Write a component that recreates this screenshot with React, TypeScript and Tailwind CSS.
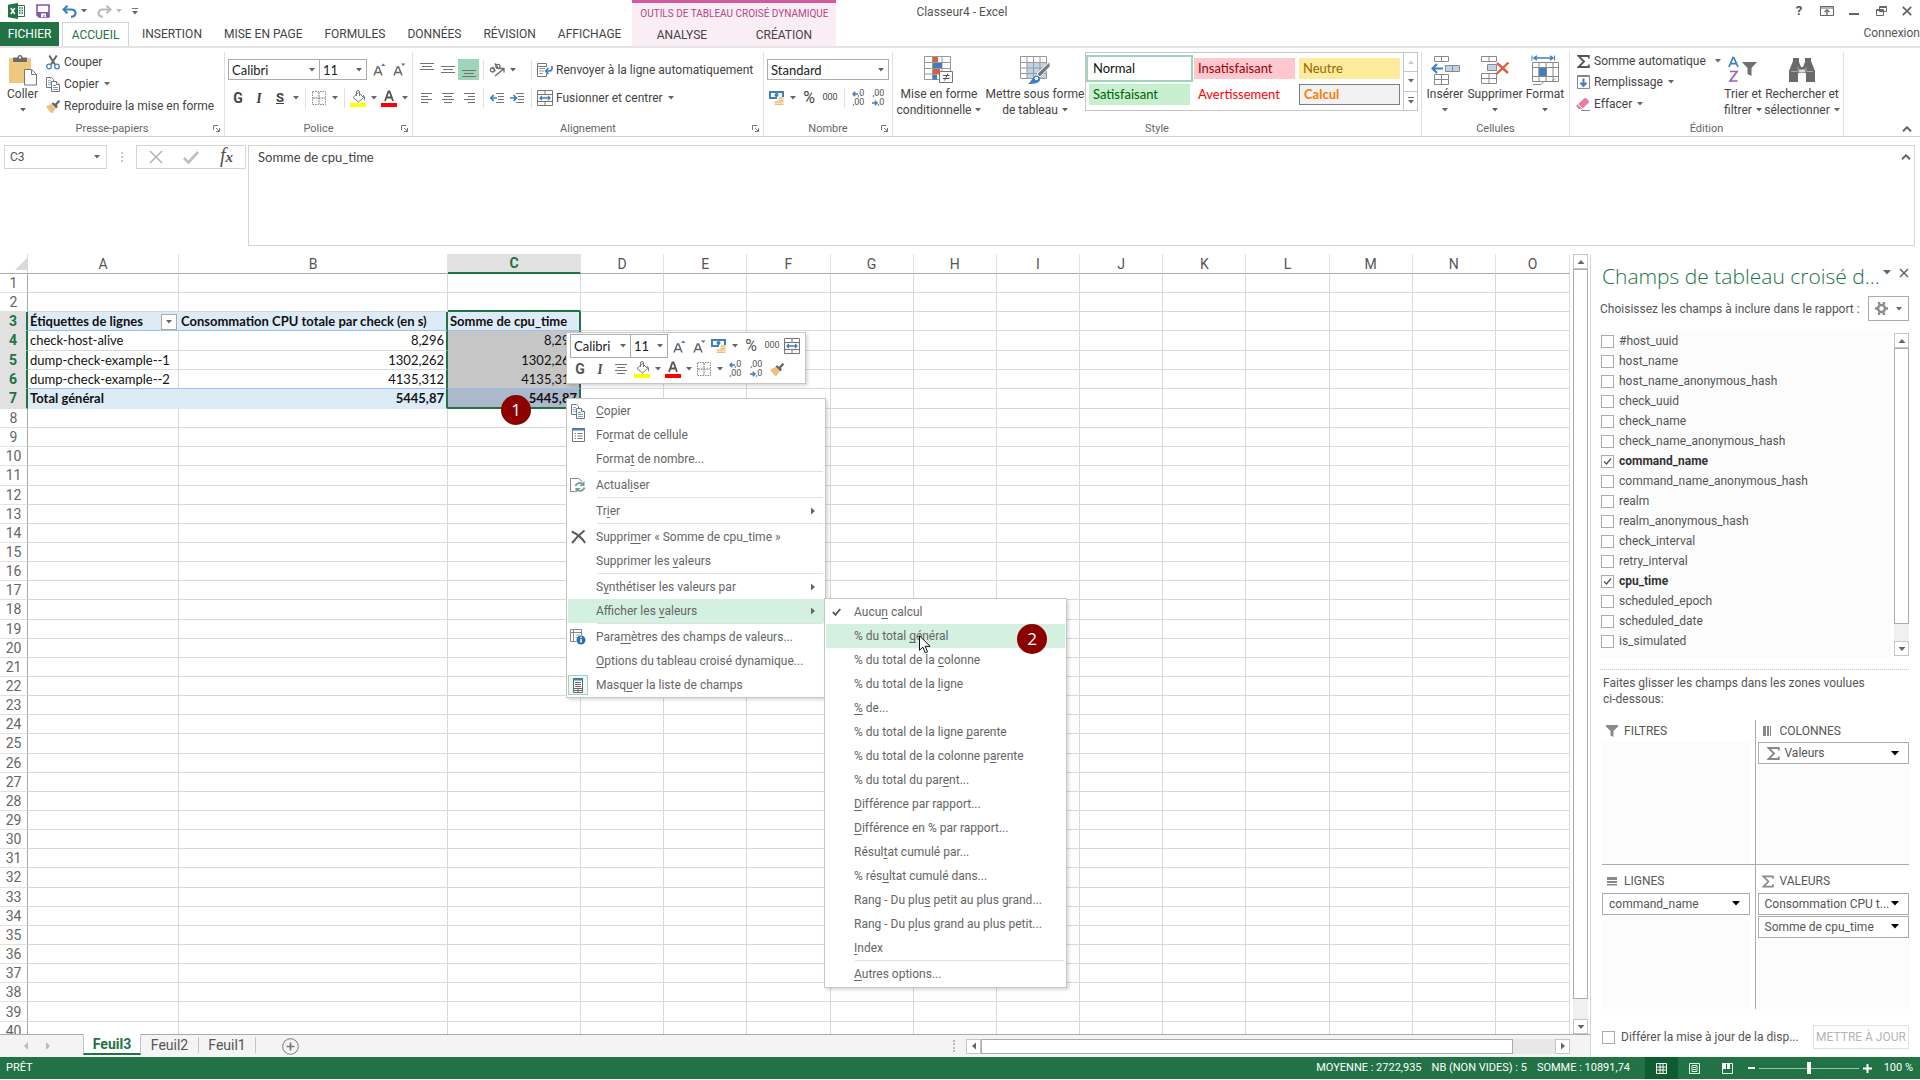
import { useState } from "react";
import type { ReactNode } from "react";
import clsx from "clsx";

/* ---------- small helpers ---------- */

const Caret = ({ className = "text-[#666]" }: { className?: string }) => (
  <svg viewBox="0 0 6 4" className={clsx("h-1 w-1.5 shrink-0", className)} fill="currentColor">
    <path d="M0 0h6L3 3.6z" />
  </svg>
);

const Tool = ({ label, className = "w-5", children }: { label: string; className?: string; children: ReactNode }) => (
  <button aria-label={label} className={clsx("flex h-5 shrink-0 items-center justify-center", className)}>
    {children}
  </button>
);

const Drop = ({ label }: { label: string }) => (
  <Tool label={label} className="w-[11px]">
    <Caret />
  </Tool>
);

const Sep = () => (
  <span className="flex h-5 w-2 shrink-0 justify-center">
    <span className="w-px bg-[#e1e1e1]" />
  </span>
);

const Combo = ({ label, value, className }: { label: string; value: string; className: string }) => (
  <span className={clsx("relative flex shrink-0 items-center border border-[#ababab] bg-white", className)}>
    <select
      aria-label={label}
      className="h-full w-full appearance-none bg-transparent pl-[3px] font-[Lato,sans-serif] text-[13px] leading-4 text-[#222] outline-none"
    >
      <option>{value}</option>
    </select>
    <Caret className="pointer-events-none absolute right-1 text-[#666]" />
  </span>
);

// "&" stands before the access key of a menu label
const Mnemonic = ({ text }: { text: string }) => {
  const i = text.indexOf("&");
  if (i < 0) return <>{text}</>;
  return (
    <>
      {text.slice(0, i)}
      <u className="underline-offset-2">{text[i + 1]}</u>
      {text.slice(i + 2)}
    </>
  );
};

/* ---------- icons ---------- */

const ExcelLogo = () => (
  <svg viewBox="0 0 17 16" className="h-4 w-[17px]">
    <path d="M9 2.5h7.5v11H9" fill="#fff" stroke="#217346" />
    <path d="M11 5h1.500M13.500 5H15M11 7.500h1.500M13.500 7.500H15M11 10h1.500M13.500 10H15" stroke="#217346" strokeWidth="1.300" />
    <path d="M0 1.800L10 0v16L0 14.200z" fill="#217346" />
    <path d="M2.800 5l4 6M6.800 5l-4 6" stroke="#fff" strokeWidth="1.500" />
  </svg>
);

const SaveIcon = () => (
  <svg viewBox="0 0 14 14" className="size-[14px]">
    <path d="M1 1h12v12H3l-2-2z" fill="#fff" stroke="#8656a8" strokeWidth="1.600" />
    <path d="M1 8h12v5H3l-2-2z" fill="#8656a8" />
    <path d="M5 9.500h5V13H8.500v-2h-1v2H5z" fill="#fff" />
  </svg>
);

const UndoIcon = ({ className = "" }: { className?: string }) => (
  <svg viewBox="0 0 15 13" className={clsx("h-[13px] w-[15px]", className)} fill="none" stroke="currentColor" strokeWidth="2.200">
    <path d="M2 4.500h7c3 0 4.500 1.600 4.500 3.600S12 11.800 9 11.800" />
    <path d="M5.500 .8L1.600 4.500l3.900 3.700" />
  </svg>
);

const PasteIcon = () => (
  <svg viewBox="0 0 28 31" className="h-[31px] w-7">
    <rect x="0" y="3" width="22" height="25" fill="#edc87e" />
    <path d="M4 2.500h4.500a2.500 2.500 0 0 1 5 0H18V7H4z" fill="#6b6b6b" />
    <circle cx="11" cy="2.600" r="1.100" fill="#fff" />
    <path d="M15.500 14.500h7l5 5v10.500h-12z" fill="#fff" stroke="#777" />
    <path d="M22.500 14.500v5h5" fill="none" stroke="#777" />
  </svg>
);

const CutIcon = () => (
  <svg viewBox="0 0 14 15" className="h-[15px] w-[14px]" fill="none">
    <path d="M3.300 .5L9 9.500M10.700 .5L5 9.500" stroke="#666" strokeWidth="2" />
    <circle cx="3" cy="11.500" r="2.300" stroke="#4a82bd" strokeWidth="1.300" />
    <circle cx="11" cy="11.500" r="2.300" stroke="#4a82bd" strokeWidth="1.300" />
  </svg>
);

const CopyIcon = () => (
  <svg viewBox="0 0 14 15" className="h-[15px] w-[14px]" fill="#fff" stroke="#777">
    <path d="M.5 .5h5l2 2v8h-7z" />
    <path d="M2 3.500h3M2 5.500h3M2 7.500h3" stroke="#8ab0d8" />
    <path d="M5.500 4.500h5l3 3v7h-8z" />
    <path d="M10.500 4.500v3h3" />
    <path d="M7 8.500h3M7 10.500h5M7 12.500h5" stroke="#6f9fd0" />
  </svg>
);

const BrushIcon = () => (
  <svg viewBox="0 0 15 13" className="h-[13px] w-[15px]">
    <path d="M0 6.500L5.500 4 9.500 8.500 6.500 13 4.500 12.500z" fill="#edc07c" />
    <path d="M5.500 3.500L7 2.200l2 1.600L12.500 0l1.800 1.200L11 5l.8 1.800L10.200 8.500z" fill="#666" />
  </svg>
);

const FontSize = ({ down }: { down?: boolean }) => (
  <svg viewBox="0 0 13 13" className="size-[13px]" fill="none">
    <path d="M1 12.500L4.400 4h1.200L9 12.500M2.300 9.500h5.400" stroke="#666" strokeWidth="1.500" />
    <path d={down ? "M8 .5h4.500L10.200 3z" : "M8 3h4.500L10.200 .5z"} fill="#3f7fbf" />
  </svg>
);

const BorderIcon = () => (
  <svg viewBox="0 0 14 14" className="size-[14px]" fill="none" stroke="#888">
    <path d="M.5 .5h13v13H.5z" strokeDasharray="1.500 1" />
    <path d="M7 1v12M1 7h12" stroke="#777" strokeDasharray="2 .8" />
  </svg>
);

const FillIcon = () => (
  <svg viewBox="0 0 16 17" className="h-[17px] w-4">
    <path d="M3 7.500L8.500 2.500l5 5-5 4.500z" fill="#fff" stroke="#777" />
    <path d="M6.500 6V2a1.500 1.500 0 0 1 3 0v4" fill="none" stroke="#777" />
    <path d="M12.500 4.500c2 .5 3 2.500 2.500 6.500-1-1.500-1-3-1.500-4z" fill="#3f7fbf" />
    <rect x="0" y="13" width="16" height="4" fill="#ff0" />
  </svg>
);

const FontColorIcon = () => (
  <svg viewBox="0 0 16 17" className="h-[17px] w-4">
    <path d="M4 11L7.400 1.500h1.200L12 11M5.300 7.500h5.400" fill="none" stroke="#555" strokeWidth="1.800" />
    <rect x="0" y="13" width="16" height="4" fill="red" />
  </svg>
);

const lineShapes = {
  top: "M0 1.500h14M2 4.500h10M0 7.500h14",
  middle: "M0 4.500h14M2 7.500h10M0 10.500h14",
  bottom: "M0 8.500h14M2 11.500h10M0 14.500h14",
  left: "M1 3.500h11M1 6.500h7M1 9.500h11M1 12.500h7",
  center: "M1 3.500h12M3 6.500h8M1 9.500h12M3 12.500h8",
  right: "M2 3.500h11M6 6.500h7M2 9.500h11M6 12.500h7",
};

const Lines = ({ kind }: { kind: keyof typeof lineShapes }) => (
  <svg viewBox="0 0 14 16" className="h-4 w-[14px]" stroke="#737373">
    <path d={lineShapes[kind]} />
  </svg>
);

const OrientationIcon = () => (
  <svg viewBox="0 0 16 14" className="h-[14px] w-4" fill="none" stroke="#6a6a6a" strokeWidth="1.300">
    <circle cx="3.400" cy="7" r="2" />
    <path d="M3.200 3.800l3.200 4.400M5.800 .5l4 5.500" />
    <circle cx="9" cy="3.400" r="2" />
    <path d="M6 13l8.500-7M11 5.500h4v4" />
  </svg>
);

const IndentIcon = ({ right }: { right?: boolean }) => (
  <svg viewBox="0 0 14 12" className="h-3 w-[14px]" fill="none">
    <path d="M6 1.500h8M8 4.500h6M8 7.500h6M6 10.500h8" stroke="#777" />
    <path d={right ? "M0 6h6M3.500 3L6.500 6l-3 3" : "M1 6h6M3.800 3L.8 6l3 3"} stroke="#3f7fbf" strokeWidth="1.700" />
  </svg>
);

const WrapIcon = () => (
  <svg viewBox="0 0 16 14" className="h-[14px] w-4" fill="none">
    <path d="M.5 .5h9v3h-9zM.5 3.500v10h9v-3" stroke="#777" />
    <path d="M2 5.500h6M2 8h5M2 10.500h4" stroke="#999" />
    <path d="M15 3v2.500c0 2-1 2.500-3 2.500H9M11.500 5L8.700 8l2.800 3" stroke="#3f7fbf" strokeWidth="1.700" />
  </svg>
);

const MergeIcon = () => (
  <svg viewBox="0 0 16 16" className="size-4" fill="none">
    <path d="M.5 .5h15v15H.5zM.5 4.500h15M.5 11.500h15M8 .5v4M8 11.500v4" stroke="#777" />
    <path d="M3 8h10M5 6L3 8l2 2M11 6l2 2-2 2" stroke="#3f7fbf" strokeWidth="1.300" />
  </svg>
);

const MoneyIcon = () => (
  <svg viewBox="0 0 16 15" className="h-[15px] w-4">
    <path d="M0 0h15v8H0z" fill="#3f7fbf" />
    <path d="M2 2h11v4H2z" fill="#fff" />
    <circle cx="7.500" cy="4" r="2" fill="#3f7fbf" />
    <path d="M8 6h7v8.500H5V9h3z" fill="#fff" />
    <path d="M9.500 7h5M9.500 9.300h5M5.500 11h9M5.500 13.300h9" stroke="#edbd78" strokeWidth="1.500" />
  </svg>
);

const SmallArrow = ({ flip }: { flip?: boolean }) => (
  <svg viewBox="0 0 6 6" className={clsx("size-1.5", flip && "rotate-180")} fill="none" stroke="#3f7fbf" strokeWidth="1.500">
    <path d="M6 3H1M3.200 .8L1 3l2.200 2.200" />
  </svg>
);

const DecimalIcon = ({ less }: { less?: boolean }) => (
  <span className="flex flex-col text-[9px] leading-[9px] text-[#555]">
    <span className="flex h-[9px] items-center justify-end">
      {!less && <SmallArrow />}
      {less ? ",00" : ",0"}
    </span>
    <span className="flex h-[9px] items-center justify-end">
      {less && <SmallArrow flip />}
      {less ? ",0" : ",00"}
    </span>
  </span>
);

const CondFormatIcon = () => (
  <svg viewBox="0 0 30 28" className="h-7 w-[30px]" fill="none">
    <path d="M.5 .5h26v23H.5zM.5 6.500h26M.5 12.500h26M.5 18h26M8.500 .5v23M18 .5v23" stroke="#999" />
    <path d="M9 1h5v5H9zM9 13h7v5H9z" fill="#d7603b" />
    <path d="M9 7h9v5H9zM9 18.500h4v5H9z" fill="#3f7fbf" />
    <path d="M15.500 15.500h13v11h-13z" fill="#fff" stroke="#777" />
    <path d="M19 19.500h6.500M19 22.500h6.500M24 17.500l-3.500 7" stroke="#555" />
  </svg>
);

const TableFormatIcon = () => (
  <svg viewBox="0 0 30 28" className="h-7 w-[30px]" fill="none">
    <path d="M7 6.500h19V23H7z" fill="#bdd3ea" />
    <path d="M.5 .5h26v22H.5zM.5 6.500h26M.5 12h26M.5 17.500h26M7 .5v22M13.500 .5v22M20 .5v22" stroke="#999" />
    <path d="M30 5.500v5L20 21l-3-3z" fill="#777" stroke="#fff" />
    <path d="M8 28c3-2 4-6 7-8 3-1 6 1 5 4-1 3-5 4-12 4z" fill="#3f7fbf" />
    <circle cx="16.500" cy="22.500" r="1.800" fill="#fff" />
  </svg>
);

const InsertIcon = () => (
  <svg viewBox="0 0 29 29" className="size-[29px]" fill="#fff" stroke="#888">
    <path d="M3.500 .5h14v5h-14zM10.500 .5v5M3.500 18.500h14v10h-14zM10.500 18.500v10M3.500 23.500h14" />
    <path d="M14.500 9.500h14v6h-14z" fill="#bdd3ea" />
    <path d="M21.500 9.500v6" />
    <path d="M12 12.500H2M6 8l-4.500 4.500L6 17" stroke="#3f7fbf" strokeWidth="2.200" fill="none" />
  </svg>
);

const DeleteIcon = () => (
  <svg viewBox="0 0 29 29" className="size-[29px]" fill="#fff" stroke="#888">
    <path d="M.5 .5h15v5H.5zM8 .5v5M.5 17.500h15v10H.5zM8 17.500v10M.5 22.500h15" />
    <path d="M6.500 8.500h9v6h-9z" fill="#bdd3ea" />
    <path d="M16 7l11 10M27.500 6.500L15.500 18" stroke="#dc5f3c" strokeWidth="2.400" />
  </svg>
);

const FormatIcon = () => (
  <svg viewBox="0 0 29 30" className="h-[30px] w-[29px]" fill="#fff" stroke="#888">
    <path d="M1 .5v5M23.500 .5v5" stroke="#3f7fbf" />
    <path d="M3 3h19M6 .8L3 3l3 2.200M19 .8L22 3l-3 2.200" stroke="#3f7fbf" strokeWidth="1.400" fill="none" />
    <path d="M1.500 7.500h26v19h-26zM1.500 12.500h26M1.500 21.500h26M8 7.500v19M15 7.500v19M22 7.500v19" />
    <path d="M8 12.500h7.500v9H8z" fill="#3f7fbf" />
    <path d="M2 29.500h8l3-3h8l3-3" fill="none" />
  </svg>
);

const SigmaIcon = ({ className = "text-[#555]" }: { className?: string }) => (
  <svg viewBox="0 0 13 13" className={clsx("size-[13px]", className)} fill="none" stroke="currentColor" strokeWidth="1.800">
    <path d="M11.800 3.500V1H1.500L7 6.500 1.500 12h10.300V9.500" />
  </svg>
);

const FillDownIcon = () => (
  <svg viewBox="0 0 13 14" className="h-[14px] w-[13px]" fill="none">
    <path d="M.5 .5h12v13H.5z" stroke="#888" />
    <path d="M.5 1.500h12" stroke="#888" />
    <path d="M6.500 3.500v7M3.500 7.800l3 3 3-3" stroke="#3f7fbf" strokeWidth="2" />
  </svg>
);

const EraserIcon = () => (
  <svg viewBox="0 0 14 14" className="size-[14px]">
    <path d="M0 9L8 1.500c1-1 1.500-1 2.500 0l2 2c1 1 .5 1.500 0 2.500L6 12H3z" fill="#e8809b" />
    <path d="M2 7.500l4.500 4" stroke="#fff" />
    <path d="M5 13.500h9" stroke="#888" />
  </svg>
);

const SortIcon = () => (
  <svg viewBox="0 0 30 28" className="h-7 w-[30px]" fill="none">
    <path d="M1 11L5 1.500h.8L10 11M2.500 7.700h6" stroke="#3f7fbf" strokeWidth="1.700" />
    <path d="M2 15.500h7l-7 9.500h7.500" stroke="#9b5fc0" strokeWidth="1.700" />
    <path d="M14 6h15l-5.500 6v8l-4-2v-6z" fill="#6f6f6f" />
  </svg>
);

const FindIcon = () => (
  <svg viewBox="0 0 28 26" className="h-[26px] w-7" fill="#6a6a6a">
    <path d="M1 14L5 4V1h6v4l2 5h2l2-5V1h6v3l4 10v11h-9v-9h-8v9H1z" />
    <path d="M10 10v5M18 10v5M3 14.500h6M19 14.500h6" stroke="#aaa" />
    <path d="M11 12.500h6v3h-6z" fill="#ddd" />
  </svg>
);

const FunnelIcon = () => (
  <svg viewBox="0 0 12 12" className="size-3" fill="#8a8a8a">
    <path d="M0 0h12v1.500L7.500 6v6l-3-1.500V6L0 1.500z" />
  </svg>
);

const FieldListIcon = () => (
  <svg viewBox="0 0 10 15" className="h-[15px] w-[10px]" fill="#fff" stroke="#666">
    <path d="M.5 .5h9v14h-9z" />
    <path d="M.5 1.500h9" stroke="#3f7fbf" strokeWidth="2" />
    <path d="M2 4.500h6M2 6.500h6M2 8.500h6M.5 10.500h9M5 10.500v4M.5 12.500h9" />
  </svg>
);

const CellFormatIcon = () => (
  <svg viewBox="0 0 13 14" className="h-[14px] w-[13px]" fill="#fff" stroke="#777">
    <path d="M.5 .5h12v13H.5z" />
    <path d="M0 1.500h13" stroke="#3f7fbf" strokeWidth="2" />
    <path d="M2.500 5.500h1.500M5.500 5.500h5M2.500 8h1.500M5.500 8h5M2.500 10.500h1.500M5.500 10.500h5" />
  </svg>
);

const RefreshDocIcon = () => (
  <svg viewBox="0 0 16 15" className="h-[15px] w-4" fill="none">
    <path d="M5 13.500H.5V.5h8l4 3" stroke="#888" />
    <path d="M5.500 8C6.500 5 10.500 4 13 6.500M14.500 9.500c-1 3.500-5 4.500-7.500 2" stroke="#6aa68a" strokeWidth="1.900" />
    <path d="M14.500 3v5h-5zM5.500 15v-5h5z" fill="#6aa68a" />
  </svg>
);

const CrossIcon = () => (
  <svg viewBox="0 0 15 14" className="h-[14px] w-[15px]" fill="none" stroke="#5c5c5c" strokeWidth="2">
    <path d="M.8 1.500C6 4 11 8 14.200 13M13.500 .5C9 4 4 9 1 13.200" />
  </svg>
);

const FieldSettingsIcon = () => (
  <svg viewBox="0 0 16 16" className="size-4" fill="none">
    <path d="M11.500 6V.5H.5v12h6M.5 3.500h11M3.500 .5v12" stroke="#888" />
    <path d="M5.500 6h4M5.500 8.500h2" stroke="#aaa" />
    <circle cx="11" cy="11" r="4.500" fill="#2f6fb0" />
    <path d="M11 10v3.500M11 7.800v1.300" stroke="#fff" strokeWidth="1.500" />
  </svg>
);

const Chevron = () => (
  <svg viewBox="0 0 10 6" className="h-1.5 w-[10px]" fill="none" stroke="#666" strokeWidth="2">
    <path d="M1 5.300L5 1.300l4 4" />
  </svg>
);

/* ---------- ribbon ---------- */

const Group = ({ label, launcher, className, children }: { label: string; launcher?: boolean; className: string; children: ReactNode }) => (
  <section className={clsx("flex shrink-0 flex-col border-r border-[#e1e1e1]", className)}>
    <div className="flex-1">{children}</div>
    <div className="relative flex h-[15px] items-center justify-center text-[11px] leading-[15px] text-[#666]">
      {label}
      {launcher && (
        <button aria-label={"Options " + label} className="absolute right-1">
          <svg viewBox="0 0 7 7" className="size-[7px]" fill="none" stroke="#777">
            <path d="M.5 5V.5H5M3 3l3 3M6.500 3v3.500H3" />
          </svg>
        </button>
      )}
    </div>
  </section>
);

const BigButton = ({ icon, lines, caret = "below", className }: { icon: ReactNode; lines: string[]; caret?: "below" | "inline"; className?: string }) => (
  <button className={clsx("flex shrink-0 flex-col items-center pt-[2px] text-[12px] leading-4 whitespace-nowrap", className)}>
    <span className="flex h-8 items-center">{icon}</span>
    {lines.map((line, i) => (
      <span key={line} className="flex items-center gap-1">
        {line}
        {caret === "inline" && i === lines.length - 1 && <Caret />}
      </span>
    ))}
    {caret === "below" && (
      <span className="flex h-4 items-center">
        <Caret />
      </span>
    )}
  </button>
);

const RowButton = ({ icon, label, caret, className = "h-[22px]" }: { icon: ReactNode; label: string; caret?: "near" | "far"; className?: string }) => (
  <button className={clsx("flex shrink-0 items-center gap-[3px] text-[12px] whitespace-nowrap", className)}>
    <span className="flex w-4 justify-center">{icon}</span>
    {label}
    {caret && <span className={caret === "far" ? "pl-1.5" : "pl-0.5"}><Caret /></span>}
  </button>
);

const cellStyles = [
  { name: "Normal", cls: "bg-white text-[#111] outline-2 outline-offset-1 outline-[#9fd5b7]" },
  { name: "Insatisfaisant", cls: "bg-[#ffc7ce] text-[#9c0006]" },
  { name: "Neutre", cls: "bg-[#ffeb9c] text-[#9c6500]" },
  { name: "Satisfaisant", cls: "bg-[#c6efce] text-[#006100]" },
  { name: "Avertissement", cls: "bg-white text-[#ff0000]" },
  { name: "Calcul", cls: "border border-[#7f7f7f] bg-[#f2f2f2] font-bold text-[#fa7d00]" },
];

const tabs = ["INSERTION", "MISE EN PAGE", "FORMULES", "DONNÉES", "RÉVISION", "AFFICHAGE"];

const Header = () => (
  <header className="flex h-12 border-b-2 border-[#e4e4e4]">
    <div className="flex shrink-0 flex-col">
      <div className="flex h-[23px] items-center pl-2">
        <ExcelLogo />
        <button aria-label="Enregistrer" className="ml-[11px]"><SaveIcon /></button>
        <button aria-label="Annuler" className="ml-3 flex items-center gap-1">
          <UndoIcon className="text-[#3f7fbf]" />
          <Caret />
        </button>
        <button aria-label="Rétablir" className="ml-[10px] flex items-center gap-1">
          <UndoIcon className="-scale-x-100 text-[#bbb]" />
          <Caret className="text-[#bbb]" />
        </button>
        <button aria-label="Personnaliser" className="ml-[10px] flex flex-col gap-0.5">
          <span className="h-px w-1.5 bg-[#777]" />
          <Caret />
        </button>
      </div>
      <nav className="flex h-[25px] items-center text-[12px] text-[#444]">
        <button className="h-full w-[59px] bg-[#217346] text-white">FICHIER</button>
        <button className="z-10 mr-[2px] ml-[3px] h-full w-[67px] border border-b-0 border-[#d4d4d4] bg-white text-[#217346]">ACCUEIL</button>
        {tabs.map((t) => (
          <button key={t} className="px-[11px] whitespace-nowrap">{t}</button>
        ))}
      </nav>
    </div>
    <div className="flex h-[46px] w-[204px] shrink-0 flex-col border-t-[3px] border-[#cf5c9f] bg-[#faedf4]">
      <div className="flex h-5 items-center justify-center text-[10px] whitespace-nowrap text-[#b3478a]">OUTILS DE TABLEAU CROISÉ DYNAMIQUE</div>
      <div className="flex flex-1 items-center justify-around text-[12px] text-[#444]">
        <button>ANALYSE</button>
        <button>CRÉATION</button>
      </div>
    </div>
    <h1 className="flex-1 pt-1 pl-20 text-[12px] leading-4 text-[#555]">Classeur4 - Excel</h1>
    <div className="flex flex-col items-end text-[#555]">
      <div className="flex h-[22px] items-center gap-[15px] pr-2">
        <button aria-label="Aide" className="w-3 text-[13px] font-bold">?</button>
        <button aria-label="Options d'affichage du ruban">
          <svg viewBox="0 0 14 10" className="h-[10px] w-[14px]" fill="none" stroke="#666">
            <path d="M.5 .5h13v9H.5zM.5 2h13" />
            <path d="M7 9V4M4.500 6L7 3.800 9.500 6" strokeWidth="1.300" />
          </svg>
        </button>
        <button aria-label="Réduire" className="w-3 pt-1.5"><span className="block h-0.5 w-[10px] bg-[#666]" /></button>
        <button aria-label="Niveau inférieur">
          <svg viewBox="0 0 11 10" className="h-[10px] w-[11px]" fill="#fff" stroke="#666">
            <path d="M3.500 .5h7v5h-7zM3.500 1.500h7M.5 3.500h7v6h-7zM.5 4.500h7" />
          </svg>
        </button>
        <button aria-label="Fermer">
          <svg viewBox="0 0 10 10" className="size-[10px]" stroke="#666" strokeWidth="1.800">
            <path d="M.8 .8l8.400 8.400M9.200 .8L.8 9.200" />
          </svg>
        </button>
      </div>
      <a href="#connexion" className="pt-[3px] text-[12px] leading-4">Connexion</a>
    </div>
  </header>
);

const Ribbon = () => (
  <div className="flex h-[89px] border-b border-[#d4d4d4] pt-1 text-[#444]">
    <Group label="Presse-papiers" launcher className="w-[225px]">
      <div className="flex">
        <BigButton icon={<PasteIcon />} lines={["Coller"]} className="w-[45px]" />
        <div className="flex flex-col items-start">
          <RowButton icon={<CutIcon />} label="Couper" className="h-5" />
          <RowButton icon={<CopyIcon />} label="Copier" caret="near" className="h-6" />
          <RowButton icon={<BrushIcon />} label="Reproduire la mise en forme" className="h-5" />
        </div>
      </div>
    </Group>

    <Group label="Police" launcher className="w-[188px]">
      <div className="flex flex-col gap-2 pt-[7px] pl-[3px]">
        <div className="flex h-[21px] items-center">
          <Combo label="Police" value="Calibri" className="h-[21px] w-[92px]" />
          <Combo label="Taille" value="11" className="-ml-px h-[21px] w-12" />
          <Tool label="Augmenter la taille" className="ml-[2px] w-5"><FontSize /></Tool>
          <Tool label="Réduire la taille"><FontSize down /></Tool>
        </div>
        <div className="flex items-center">
          <Tool label="Gras"><b className="text-[14px]">G</b></Tool>
          <Tool label="Italique" className="w-[22px]"><i className="font-serif text-[14px] font-bold">I</i></Tool>
          <Tool label="Souligné"><b className="text-[13px] underline">S</b></Tool>
          <Drop label="Options de soulignement" />
          <Sep />
          <Tool label="Bordures"><BorderIcon /></Tool>
          <Drop label="Options de bordure" />
          <Sep />
          <Tool label="Remplissage"><FillIcon /></Tool>
          <Drop label="Couleurs de remplissage" />
          <Tool label="Couleur de police"><FontColorIcon /></Tool>
          <Drop label="Couleurs de police" />
        </div>
      </div>
    </Group>

    <Group label="Alignement" launcher className="w-[351px]">
      <div className="flex flex-col gap-2 pt-[7px] pl-[3px]">
        <div className="flex h-[21px] items-center">
          <Tool label="Aligner en haut" className="w-[21px]"><Lines kind="top" /></Tool>
          <Tool label="Aligner au centre" className="w-[21px]"><Lines kind="middle" /></Tool>
          <button aria-label="Aligner en bas" className="flex size-[21px] items-center justify-center bg-[#9fd5b7]"><Lines kind="bottom" /></button>
          <Sep />
          <Tool label="Orientation"><OrientationIcon /></Tool>
          <Drop label="Options d'orientation" />
          <span className="w-[9px]" />
          <Sep />
          <RowButton icon={<WrapIcon />} label="Renvoyer à la ligne automatiquement" className="h-5 pl-[2px]" />
        </div>
        <div className="flex h-5 items-center">
          <Tool label="Aligner à gauche" className="w-[21px]"><Lines kind="left" /></Tool>
          <Tool label="Centrer" className="w-[21px]"><Lines kind="center" /></Tool>
          <Tool label="Aligner à droite" className="w-[21px]"><Lines kind="right" /></Tool>
          <Sep />
          <Tool label="Diminuer le retrait"><IndentIcon /></Tool>
          <Tool label="Augmenter le retrait"><IndentIcon right /></Tool>
          <Sep />
          <RowButton icon={<MergeIcon />} label="Fusionner et centrer" caret="near" className="h-5 pl-[2px]" />
        </div>
      </div>
    </Group>

    <Group label="Nombre" launcher className="w-[129px]">
      <div className="flex flex-col gap-2 pt-[7px] pl-[3px]">
        <Combo label="Format de nombre" value="Standard" className="h-[21px] w-[122px]" />
        <div className="flex items-center">
          <Tool label="Format comptable"><MoneyIcon /></Tool>
          <Drop label="Options comptables" />
          <Tool label="Pourcentage" className="w-[22px]"><span className="text-[16px]">%</span></Tool>
          <Tool label="Milliers"><span className="text-[9px]">000</span></Tool>
          <Sep />
          <Tool label="Ajouter une décimale"><DecimalIcon /></Tool>
          <Tool label="Réduire les décimales"><DecimalIcon less /></Tool>
        </div>
      </div>
    </Group>

    <Group label="Style" className="w-[529px]">
      <div className="flex items-start">
        <BigButton icon={<CondFormatIcon />} lines={["Mise en forme", "conditionnelle"]} caret="inline" className="w-[92px]" />
        <BigButton icon={<TableFormatIcon />} lines={["Mettre sous forme", "de tableau"]} caret="inline" className="w-[100px]" />
        <div className="flex border border-[#c6c6c6] font-[Lato,sans-serif] text-[13px]">
          <div className="grid grid-cols-3 gap-x-1 gap-y-[5px] px-[3px] py-[5px]">
            {cellStyles.map((s) => (
              <button key={s.name} className={clsx("flex h-[21px] w-[101px] items-center pl-1", s.cls)}>{s.name}</button>
            ))}
          </div>
          <div className="flex w-[14px] flex-col divide-y divide-[#c6c6c6] border-l border-[#c6c6c6]">
            <button aria-label="Précédent" className="flex flex-1 items-center justify-center"><Caret className="rotate-180 text-[#ccc]" /></button>
            <button aria-label="Suivant" className="flex flex-1 items-center justify-center"><Caret /></button>
            <button aria-label="Autres" className="flex flex-1 flex-col items-center justify-center gap-0.5"><span className="h-px w-1.5 bg-[#777]" /><Caret /></button>
          </div>
        </div>
      </div>
    </Group>

    <Group label="Cellules" className="w-[148px]">
      <div className="flex">
        <BigButton icon={<InsertIcon />} lines={["Insérer"]} className="w-[46px]" />
        <BigButton icon={<DeleteIcon />} lines={["Supprimer"]} className="w-[54px]" />
        <BigButton icon={<FormatIcon />} lines={["Format"]} className="w-[46px]" />
      </div>
    </Group>

    <Group label="Édition" className="w-[274px]">
      <div className="flex pl-[5px]">
        <div className="flex w-[147px] flex-col items-start">
          <RowButton icon={<SigmaIcon />} label="Somme automatique" caret="far" className="h-[18px]" />
          <RowButton icon={<FillDownIcon />} label="Remplissage" caret="near" className="h-6" />
          <RowButton icon={<EraserIcon />} label="Effacer" caret="near" className="h-5" />
        </div>
        <BigButton icon={<SortIcon />} lines={["Trier et", "filtrer"]} caret="inline" className="w-[42px]" />
        <BigButton icon={<FindIcon />} lines={["Rechercher et", "sélectionner"]} caret="inline" className="w-[76px]" />
      </div>
    </Group>

    <div className="flex flex-1 items-end justify-end pr-2 pb-1">
      <button aria-label="Réduire le ruban"><Chevron /></button>
    </div>
  </div>
);

const FormulaBar = () => (
  <div className="flex h-[109px] pt-2 pr-[5px] pl-1">
    <div className="flex h-6 w-[103px] shrink-0 items-center border border-[#d4d4d4]">
      <input aria-label="Zone Nom" defaultValue="C3" className="w-full pl-[5px] text-[12px] text-[#555] outline-none" />
      <Caret className="mr-1.5 text-[#666]" />
    </div>
    <div className="flex h-6 w-[29px] shrink-0 flex-col items-center justify-center gap-0.5">
      <span className="size-0.5 bg-[#c4c4c4]" />
      <span className="size-0.5 bg-[#c4c4c4]" />
      <span className="size-0.5 bg-[#c4c4c4]" />
    </div>
    <div className="flex h-6 w-[110px] shrink-0 items-center justify-between border border-[#d4d4d4] px-3">
      <button aria-label="Annuler la saisie">
        <svg viewBox="0 0 14 14" className="size-[14px]" stroke="#b5b5b5" strokeWidth="1.600"><path d="M1 1l12 12M13 1L1 13" /></svg>
      </button>
      <button aria-label="Valider">
        <svg viewBox="0 0 16 13" className="h-[13px] w-4" fill="none" stroke="#c0c0c0" strokeWidth="2.800"><path d="M1 7l4.500 4.500L15 1" /></svg>
      </button>
      <button aria-label="Insérer une fonction" className="pb-0.5 font-[Liberation_Serif,serif] text-[20px] leading-5 text-[#555] italic">
        f<span className="text-[15px] font-bold">x</span>
      </button>
    </div>
    <div className="ml-[2px] flex h-[101px] flex-1 border border-[#d4d4d4]">
      <textarea
        aria-label="Barre de formule"
        defaultValue="Somme de cpu_time"
        className="flex-1 resize-none pt-[3px] pl-[9px] font-[Lato,sans-serif] text-[13px] leading-4 text-[#444] outline-none"
      />
      <button aria-label="Réduire la barre de formule" className="self-start pt-2 pr-[3px]"><Chevron /></button>
    </div>
  </div>
);

/* ---------- sheet ---------- */

const columns = ["A", "B", "C", "D", "E", "F", "G", "H", "I", "J", "K", "L", "M", "N", "O"];

const pivot: Record<number, string[]> = {
  3: ["Étiquettes de lignes", "Consommation CPU totale par check (en s)", "Somme de cpu_time"],
  4: ["check-host-alive", "8,296", "8,296"],
  5: ["dump-check-example--1", "1302,262", "1302,262"],
  6: ["dump-check-example--2", "4135,312", "4135,312"],
  7: ["Total général", "5445,87", "5445,87"],
};

const cellClass = (row: number, col: number) => {
  const inPivot = row >= 3 && row <= 7;
  const blue = (row === 3 || row === 7) && col < 3;
  const selected = inPivot && col === 2;
  return clsx(
    "overflow-hidden border-b px-[2px] pt-px leading-[17px] whitespace-nowrap",
    blue && "font-bold",
    blue && !(row === 7 && col === 2) && "bg-[#ddebf7]",
    selected && row > 3 && row < 7 && "bg-[#c6c6c6]",
    selected && row === 7 && "bg-[#acb9ca]",
    inPivot && row > 3 && (col === 1 || col === 2) && "text-right",
    // horizontal rules
    (row === 2 || row === 7) && col === 2 ? "border-b-2 border-b-[#217346]"
      : (row === 3 || row === 6) && col < 3 ? "border-b-[#9bc2e6]"
      : row === 7 && col < 2 ? "border-b-[#ddebf7]"
      : selected ? "border-b-[#c6c6c6]"
      : "border-b-[#d9d9d9]",
    // vertical rules
    selected || (inPivot && col === 1) ? "border-r-2 border-r-[#217346]"
      : blue ? "border-r border-r-[#ddebf7]"
      : "border-r border-r-[#d9d9d9]"
  );
};

const Sheet = () => (
  <table className="h-full w-full table-fixed border-separate border-spacing-0 font-[Lato,sans-serif] text-[13px] text-[#111]">
    <colgroup>
      <col className="w-7" />
      <col className="w-[151px]" />
      <col className="w-[269px]" />
      <col className="w-[133px]" />
      {columns.slice(3, 14).map((c) => <col key={c} />)}
      <col className="w-[74px]" />
    </colgroup>
    <thead className="font-[Roboto,sans-serif] text-[14px] leading-[17px] text-[#555]">
      <tr className="h-[19px]">
        <th className="border-r border-b border-[#ababab] border-r-[#d9d9d9]">
          <svg viewBox="0 0 12 12" className="ml-auto size-3" fill="#d9d9d9"><path d="M12 0v12H0z" /></svg>
        </th>
        {columns.map((c) => (
          <th
            key={c}
            className={clsx(
              "border-r border-r-[#e1e1e1] pt-px",
              c === "C" ? "border-b-2 border-b-[#217346] bg-[#e1e1e1] font-bold text-[#217346]" : "border-b border-b-[#ababab] font-normal"
            )}
          >
            {c}
          </th>
        ))}
      </tr>
    </thead>
    <tbody>
      {Array.from({ length: 39 }, (_, i) => i + 1).map((row) => {
        const active = row >= 3 && row <= 7;
        return (
          <tr key={row}>
            <th
              className={clsx(
                "border-b border-b-[#e1e1e1] pt-px font-[Roboto,sans-serif] text-[14px] leading-[17px]",
                active ? "border-r-2 border-r-[#217346] bg-[#e1e1e1] font-bold text-[#217346]" : "border-r border-r-[#ababab] font-normal text-[#666]"
              )}
            >
              {row}
            </th>
            {columns.map((c, col) => (
              <td key={c} className={cellClass(row, col)}>
                {row === 3 && col === 0 ? (
                  <span className="flex items-center justify-between">
                    {pivot[3][0]}
                    <button aria-label="Filtrer" className="-mr-px flex size-4 items-center justify-center border border-[#ababab] bg-white"><Caret /></button>
                  </span>
                ) : (
                  pivot[row]?.[col]
                )}
              </td>
            ))}
          </tr>
        );
      })}
      <tr className="h-3">
        <th className="border-r border-[#ababab] font-[Roboto,sans-serif] text-[14px] font-normal text-[#666]">
          <div className="h-3 overflow-hidden leading-[19px]">40</div>
        </th>
        {columns.map((c) => <td key={c} className="border-r border-[#d9d9d9]" />)}
      </tr>
    </tbody>
  </table>
);

const ScrollBtn = ({ dir }: { dir: "up" | "down" | "left" | "right" }) => (
  <button aria-label={dir} className="flex size-[15px] shrink-0 items-center justify-center border border-[#c6c6c6] bg-white">
    <svg
      viewBox="0 0 8 8"
      className={clsx("size-2", dir === "down" && "rotate-180", dir === "left" && "-rotate-90", dir === "right" && "rotate-90")}
      fill="#666"
    >
      <path d="M.5 6h7L4 2z" />
    </svg>
  </button>
);

const SheetTabs = () => (
  <div className="flex h-[23px] shrink-0 bg-[#f4f4f4] text-[14px] text-[#555]">
    <div className="flex w-[83px] items-center justify-center gap-[18px] border-t border-[#ababab] pr-[10px]">
      <button aria-label="Feuille précédente"><svg viewBox="0 0 4 8" className="h-2 w-1" fill="#bbb"><path d="M4 0v8L0 4z" /></svg></button>
      <button aria-label="Feuille suivante"><svg viewBox="0 0 4 8" className="h-2 w-1" fill="#bbb"><path d="M0 0v8l4-4z" /></svg></button>
    </div>
    <button className="h-[21px] w-[58px] border-x border-b-2 border-x-[#c6c6c6] border-b-[#217346] bg-white leading-4 font-bold text-[#217346]">Feuil3</button>
    <div className="flex flex-1 border-t border-[#ababab]">
      <button className="mt-0.5 h-4 w-[58px] border-r border-[#c6c6c6] leading-[14px]">Feuil2</button>
      <button className="mt-0.5 h-4 w-[57px] border-r border-[#c6c6c6] leading-[14px]">Feuil1</button>
      <button aria-label="Nouvelle feuille" className="ml-[26px]">
        <svg viewBox="0 0 17 17" className="size-[17px]" fill="none" stroke="#777">
          <circle cx="8.500" cy="8.500" r="7.800" />
          <path d="M8.500 4.500v8M4.500 8.500h8" strokeWidth="1.700" />
        </svg>
      </button>
    </div>
    <div className="flex w-[639px] items-center border-t border-[#ababab] pr-5">
      <span className="mr-[11px] ml-[2px] h-3 border-l-2 border-dotted border-[#bbb]" />
      <ScrollBtn dir="left" />
      <div className="flex h-[15px] flex-1 bg-[#e8e8e8] pr-[42px]">
        <div className="flex-1 border border-[#ababab] bg-white" />
      </div>
      <ScrollBtn dir="right" />
    </div>
  </div>
);

/* ---------- pivot field pane ---------- */

const fields = [
  "#host_uuid", "host_name", "host_name_anonymous_hash", "check_uuid", "check_name", "check_name_anonymous_hash",
  "command_name", "command_name_anonymous_hash", "realm", "realm_anonymous_hash", "check_interval", "retry_interval",
  "cpu_time", "scheduled_epoch", "scheduled_date", "is_simulated",
];

const Check = ({ id, checked, onChange }: { id: string; checked: boolean; onChange: () => void }) => (
  <span className="relative flex size-[13px] shrink-0">
    <input id={id} type="checkbox" checked={checked} onChange={onChange} className="size-[13px] appearance-none border border-[#ababab] bg-white" />
    {checked && (
      <svg viewBox="0 0 13 13" className="pointer-events-none absolute inset-0" fill="none" stroke="#555" strokeWidth="1.400">
        <path d="M3 6.500L5.500 9 10 3.500" />
      </svg>
    )}
  </span>
);

const Zone = ({ icon, title, items, className }: { icon: ReactNode; title: string; items: ReactNode[]; className: string }) => (
  <div className={clsx("flex flex-col", className)}>
    <h3 className="flex h-[22px] items-center gap-1.5 pb-px pl-1 text-[12px] text-[#555]">
      <span className="flex w-3 justify-center">{icon}</span>
      {title}
    </h3>
    <div className="flex flex-1 flex-col gap-px bg-[#fcfcfc]">
      {items.map((item, i) => (
        <button key={i} className="flex h-[22px] items-center justify-between border border-[#ababab] bg-white pr-[9px] pl-1.5 text-[12px] text-[#555]">
          <span className="flex items-center gap-[5px]">{item}</span>
          <svg viewBox="0 0 8 5" className="h-[5px] w-2"><path d="M0 0h8L4 4.500z" /></svg>
        </button>
      ))}
    </div>
  </div>
);

const FieldPane = () => {
  const [picked, setPicked] = useState(["command_name", "cpu_time"]);
  const [defer, setDefer] = useState(false);
  const toggle = (f: string) => setPicked((p) => (p.includes(f) ? p.filter((x) => x !== f) : [...p, f]));

  return (
    <aside className="mt-[9px] flex w-[330px] shrink-0 flex-col border-l border-[#d4d4d4] pr-[11px] pl-[9px]">
      <div className="flex h-[41px] items-center">
        <h2 className="flex-1 pt-0.5 pl-[2px] font-[Open_Sans,sans-serif] text-[21px] font-light whitespace-nowrap text-[#217346]">Champs de tableau croisé d...</h2>
        <div className="flex items-center gap-2 pb-1.5">
          <button aria-label="Options du volet"><svg viewBox="0 0 8 5" className="h-[5px] w-2" fill="#666"><path d="M0 0h8L4 4.500z" /></svg></button>
          <button aria-label="Fermer le volet">
            <svg viewBox="0 0 10 10" className="size-[10px]" stroke="#666" strokeWidth="1.600"><path d="M1 1l8 8M9 1L1 9" /></svg>
          </button>
        </div>
      </div>
      <div className="flex h-[25px] items-center justify-between text-[12px] text-[#555]">
        <span className="whitespace-nowrap">Choisissez les champs à inclure dans le rapport :</span>
        <button aria-label="Outils" className="flex h-[25px] w-[41px] items-center justify-center gap-2 border border-[#ababab]">
          <svg viewBox="0 0 12 12" className="size-[13px]" fill="none" stroke="#8a8a8a">
            <circle cx="6" cy="6" r="3.200" strokeWidth="2.200" />
            <path d="M3.800 0v2.500M8.200 0v2.500M3.800 9.500V12M8.200 9.500V12M0 6h2M10 6h2" strokeWidth="2.200" />
          </svg>
          <Caret />
        </button>
      </div>
      <div className="mt-[10px] flex gap-[3px]">
        <ul className="flex-1 bg-[#fcfcfc] pb-[7px] pl-px">
          {fields.map((f) => (
            <li key={f} className="flex h-5 items-center gap-[5px] text-[12px] text-[#555]">
              <Check id={f} checked={picked.includes(f)} onChange={() => toggle(f)} />
              <label htmlFor={f} className={clsx(picked.includes(f) && "font-bold text-[#333]")}>{f}</label>
            </li>
          ))}
        </ul>
        <div className="mt-[2px] mb-[2px] flex w-[15px] flex-col bg-[#f0f0f0]">
          <ScrollBtn dir="up" />
          <div className="mb-[17px] flex-1 border border-[#ababab] bg-white" />
          <ScrollBtn dir="down" />
        </div>
      </div>
      <p className="mt-[11px] border-t border-dotted border-[#c6c6c6] pt-[5px] pl-[3px] text-[12px] leading-4 text-[#555]">
        Faites glisser les champs dans les zones voulues
        <br />
        ci-dessous:
      </p>
      <div className="mt-[13px] grid flex-1 grid-cols-2 grid-rows-2 pl-0.5">
        <Zone icon={<FunnelIcon />} title="FILTRES" items={[]} className="border-r border-b border-[#ababab] pr-[5px]" />
        <Zone
          icon={<svg viewBox="0 0 9 10" className="h-[10px] w-[9px]" fill="#8a8a8a"><path d="M0 0h3v10H0zM4 0h2v10H4zM7 0h1v10H7z" /></svg>}
          title="COLONNES"
          items={[<><SigmaIcon className="ml-0.5 text-[#888]" />Valeurs</>]}
          className="border-b border-[#ababab] pl-[2px]"
        />
        <Zone
          icon={<svg viewBox="0 0 10 9" className="h-[9px] w-[10px]" fill="#8a8a8a"><path d="M0 0h10v3H0zM0 4h10v2H0zM0 7h10v1.500H0z" /></svg>}
          title="LIGNES"
          items={["command_name"]}
          className="border-r border-[#ababab] pt-1.5 pr-[5px]"
        />
        <Zone icon={<SigmaIcon className="text-[#888]" />} title="VALEURS" items={["Consommation CPU t...", "Somme de cpu_time"]} className="pt-1.5 pl-[2px]" />
      </div>
      <div className="mt-4 mb-2 flex items-center pl-0.5 text-[12px] text-[#555]">
        <Check id="defer" checked={defer} onChange={() => setDefer(!defer)} />
        <label htmlFor="defer" className="flex-1 pl-1.5 whitespace-nowrap">Différer la mise à jour de la disp...</label>
        <button disabled className="h-6 w-24 border border-[#e1e1e1] whitespace-nowrap text-[#b5b5b5]">METTRE À JOUR</button>
      </div>
    </aside>
  );
};

/* ---------- status bar ---------- */

const StatusBar = () => (
  <footer className="mb-px flex h-[22px] shrink-0 items-center bg-[#217346] pr-[7px] pl-1.5 text-[11px] text-white">
    <span className="flex-1">PRÊT</span>
    <div className="flex gap-[10px] pr-[15px]">
      <span>MOYENNE : 2722,935</span>
      <span>NB (NON VIDES) : 5</span>
      <span>SOMME : 10891,74</span>
    </div>
    <button aria-label="Normal" className="flex h-full w-[33px] items-center justify-center bg-[#0f5c30]">
      <svg viewBox="0 0 11 11" className="size-[11px]" fill="none" stroke="#fff"><path d="M.5 .5h10v10H.5zM4 .5v10M7 .5v10M.5 4h10M.5 7h10" /></svg>
    </button>
    <button aria-label="Mise en page" className="flex h-full w-[33px] items-center justify-center">
      <svg viewBox="0 0 11 11" className="size-[11px]" fill="none" stroke="#dfe"><path d="M.5 .5h10v10H.5zM3 2.500h5v6H3zM4 4.500h3M4 6.500h3" /></svg>
    </button>
    <button aria-label="Sauts de page" className="flex h-full w-[33px] items-center justify-center">
      <svg viewBox="0 0 11 11" className="size-[11px]" fill="none" stroke="#dfe"><path d="M.5 .5h10v10H.5z" /><path d="M0 0h4v6H0zM5 0h3v6H5z" fill="#fff" stroke="none" /></svg>
    </button>
    <button aria-label="Zoom arrière" className="ml-1 h-0.5 w-[7px] bg-white" />
    <input
      aria-label="Zoom"
      type="range"
      defaultValue={50}
      className="mx-1 h-3 w-[100px] appearance-none bg-[linear-gradient(#9cc4ad,#9cc4ad)] bg-[length:100%_1px] bg-center bg-no-repeat [&::-webkit-slider-thumb]:h-3 [&::-webkit-slider-thumb]:w-1 [&::-webkit-slider-thumb]:appearance-none [&::-webkit-slider-thumb]:bg-white"
    />
    <button aria-label="Zoom avant">
      <svg viewBox="0 0 9 9" className="size-[9px]" stroke="#fff" strokeWidth="2"><path d="M4.500 0v9M0 4.500h9" /></svg>
    </button>
    <span className="w-[41px] text-right">100 %</span>
  </footer>
);

/* ---------- floating menus ---------- */

type Entry = { text?: string; icon?: ReactNode; sub?: boolean; on?: boolean; boxed?: boolean };

const contextEntries: Entry[] = [
  { text: "&Copier", icon: <CopyIcon /> },
  { text: "Fo&rmat de cellule", icon: <CellFormatIcon /> },
  { text: "Forma&t de nombre..." },
  {},
  { text: "Actual&iser", icon: <RefreshDocIcon /> },
  {},
  { text: "Tr&ier", sub: true },
  {},
  { text: "Suppri&mer « Somme de cpu_time »", icon: <CrossIcon /> },
  { text: "Supprimer les &valeurs" },
  {},
  { text: "S&ynthétiser les valeurs par", sub: true },
  { text: "Afficher les &valeurs", sub: true, on: true },
  {},
  { text: "Para&mètres des champs de valeurs...", icon: <FieldSettingsIcon /> },
  { text: "&Options du tableau croisé dynamique..." },
  { text: "Masq&uer la liste de champs", icon: <FieldListIcon />, boxed: true },
];

const TickIcon = () => (
  <svg viewBox="0 0 9 8" className="h-2 w-[9px]" fill="none" stroke="#555" strokeWidth="1.800"><path d="M.8 4l2.700 2.800L8.300 1" /></svg>
);

const showAsEntries: Entry[] = [
  { text: "Aucu&n calcul", icon: <TickIcon /> },
  { text: "% du total &général", on: true },
  { text: "% du total de la &colonne" },
  { text: "% du total de la &ligne" },
  { text: "&% de..." },
  { text: "% du total de la ligne &parente" },
  { text: "% du total de la colonne p&arente" },
  { text: "% du total du par&ent..." },
  { text: "&Différence par rapport..." },
  { text: "&Différence en % par rapport..." },
  { text: "Résul&tat cumulé par..." },
  { text: "% rés&ultat cumulé dans..." },
  { text: "Rang - Du plu&s petit au plus grand..." },
  { text: "Rang - Du p&lus grand au plus petit..." },
  { text: "&Index" },
  {},
  { text: "&Autres options..." },
];

const Menu = ({ entries, className }: { entries: Entry[]; className: string }) => (
  <div role="menu" className={clsx("absolute border border-[#c6c6c6] bg-white px-px text-[12px] text-[#666] shadow-[2px_2px_3px_rgba(0,0,0,0.15)]", className)}>
    {entries.map((e, i) =>
      e.text ? (
        <button key={i} role="menuitem" className={clsx("flex h-6 w-full items-center whitespace-nowrap", e.on && "bg-[#d3f0e0]")}>
          <span className={clsx("mr-2 flex size-5 shrink-0 items-center justify-center", e.boxed && "border border-[#9fd5b7] bg-[#eef9f3]")}>{e.icon}</span>
          <span className="flex-1 text-left"><Mnemonic text={e.text} /></span>
          {e.sub && <svg viewBox="0 0 4 8" className="mr-[9px] h-2 w-1" fill="#666"><path d="M0 .5v7L4 4z" /></svg>}
        </button>
      ) : (
        <hr key={i} className="mr-px mb-px ml-[29px] border-[#e1e1e1]" />
      )
    )}
  </div>
);

const MiniToolbar = () => (
  <div className="absolute top-[332px] left-[566px] flex w-[240px] flex-col gap-px border border-[#c6c6c6] bg-white pt-px pb-1 pl-[3px] text-[#555] shadow-[2px_2px_3px_rgba(0,0,0,0.15)]">
    <div className="flex items-center">
      <Combo label="Police" value="Calibri" className="h-6 w-[61px]" />
      <Combo label="Taille" value="11" className="-ml-px h-6 w-[38px]" />
      <Tool label="Augmenter la taille" className="ml-px w-5"><FontSize /></Tool>
      <Tool label="Réduire la taille"><FontSize down /></Tool>
      <Tool label="Format comptable"><MoneyIcon /></Tool>
      <Drop label="Options comptables" />
      <Tool label="Pourcentage" className="w-[22px]"><span className="text-[16px]">%</span></Tool>
      <Tool label="Milliers"><span className="text-[9px]">000</span></Tool>
      <Tool label="Fusionner"><MergeIcon /></Tool>
    </div>
    <div className="flex items-center">
      <Tool label="Gras"><b className="text-[14px]">G</b></Tool>
      <Tool label="Italique"><i className="font-serif text-[14px] font-bold">I</i></Tool>
      <Tool label="Centrer" className="w-[22px]"><Lines kind="center" /></Tool>
      <Tool label="Remplissage"><FillIcon /></Tool>
      <Drop label="Couleurs de remplissage" />
      <Tool label="Couleur de police"><FontColorIcon /></Tool>
      <Drop label="Couleurs de police" />
      <Tool label="Bordures"><BorderIcon /></Tool>
      <Drop label="Options de bordure" />
      <Tool label="Ajouter une décimale"><DecimalIcon /></Tool>
      <Tool label="Réduire les décimales" className="w-[22px]"><DecimalIcon less /></Tool>
      <Tool label="Reproduire la mise en forme"><BrushIcon /></Tool>
    </div>
  </div>
);

const Callout = ({ n, className }: { n: number; className: string }) => (
  <span className={clsx("absolute flex size-[30px] items-center justify-center rounded-full bg-[#8b0000] font-[Open_Sans,sans-serif] text-[17px] text-white", className)}>
    {n}
  </span>
);

export default function App() {
  return (
    <div className="relative flex h-screen flex-col overflow-hidden bg-white font-[Roboto,sans-serif]">
      <Header />
      <Ribbon />
      <FormulaBar />
      <main className="flex min-h-0 flex-1">
        <div className="flex min-w-0 flex-1 flex-col pt-2">
          <div className="flex min-h-0 flex-1">
            <div className="h-full min-w-0 flex-1"><Sheet /></div>
            <div className="mr-[2px] ml-[3px] flex w-[15px] flex-col bg-[#f0f0f0]">
              <ScrollBtn dir="up" />
              <div className="mb-5 flex-1 border border-[#ababab] bg-white" />
              <ScrollBtn dir="down" />
            </div>
          </div>
          <SheetTabs />
        </div>
        <FieldPane />
      </main>
      <StatusBar />

      <Menu entries={contextEntries} className="top-[398px] left-[566px] w-[260px]" />
      <MiniToolbar />
      <Menu entries={showAsEntries} className="top-[598px] left-[824px] w-[243px] py-px" />
      <Callout n={1} className="top-[395px] left-[501px]" />
      <Callout n={2} className="top-[624px] left-[1017px]" />
      <svg viewBox="0 0 12 19" className="absolute top-[635px] left-[919px] h-[19px] w-3" fill="#fff" stroke="#111">
        <path d="M.5 .8v14.500l3.400-3.200 2.300 5.700 2.300-1-2.300-5.500h4.900z" />
      </svg>
    </div>
  );
}
